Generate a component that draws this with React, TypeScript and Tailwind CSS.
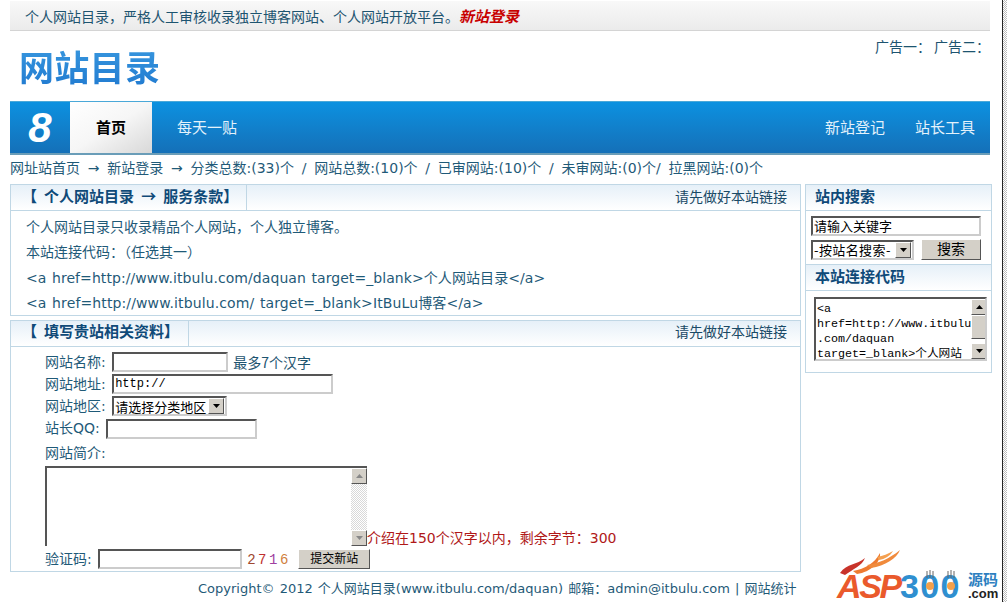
import React from "react";

const bevelIn = "border-2 border-t-[#555] border-l-[#555] border-r-[#ccc] border-b-[#ccc] bg-white";
const bevelOut = "border border-t-white border-l-white border-r-[#555] border-b-[#555] bg-[#d4d0c8]";
const mix = { fontFamily: "'DejaVu Sans','Noto Sans CJK SC',sans-serif" };
const mono = { fontFamily: "'Liberation Mono','Noto Sans CJK SC',monospace" };
const cjk = { fontFamily: "'Noto Sans CJK SC',sans-serif" };
const arial = { fontFamily: "'Liberation Sans',sans-serif" };

function Arrow({ dir = "down", color = "#000" }: { dir?: "up" | "down"; color?: string }) {
  return (
    <svg width="7" height="4" viewBox="0 0 7 4">
      <path d={dir === "down" ? "M0 0H7L3.5 4Z" : "M0 4H7L3.5 0Z"} fill={color} />
    </svg>
  );
}

function ScrollBtn({ dir, color }: { dir: "up" | "down"; color?: string }) {
  return (
    <div className={`${bevelOut} flex h-4 w-4 shrink-0 items-center justify-center`}>
      <Arrow dir={dir} color={color} />
    </div>
  );
}

function PanelHead({ title, tabWidth, lift }: { title: string; tabWidth: string; lift: string }) {
  return (
    <div className="flex h-[26px] items-stretch justify-between border-b border-[#c0d7e5] bg-gradient-to-b from-[#e6f0f8] to-white pr-[13px]">
      <div className={`${tabWidth} ${lift} flex items-center whitespace-pre border-r border-[#c0d7e5] pl-[11px] text-[15px] font-bold text-[#0f4a78] [word-spacing:3.7px]`} style={cjk}>
        {title}
      </div>
      <span className={`${lift} flex items-center text-[14px] text-[#1a4a66]`} style={cjk}>请先做好本站链接</span>
    </div>
  );
}

function Row({ label, className, children }: { label: string; className: string; children?: React.ReactNode }) {
  return (
    <div className={`flex items-center ${className}`}>
      <span className="whitespace-pre text-[14px] text-[#1f5a78]" style={mix}>{label}</span>
      {children}
    </div>
  );
}

function SideHead({ title }: { title: string }) {
  return (
    <div className="flex h-[26px] items-center border-b border-[#c0d7e5] bg-gradient-to-b from-[#e6f0f8] to-white pb-[2px] pl-[9px] text-[15px] font-bold text-[#0f4a78]" style={cjk}>
      {title}
    </div>
  );
}

export default function App() {
  return (
    <div className="flex h-[602px] w-[1007px] overflow-hidden bg-white" style={cjk}>
      <div className="relative w-[1002px] shrink-0 pl-[10px] pt-px">
        <div className="w-[980px]">
          <div className="flex h-[30px] items-center border-b border-[#d4d4d4] bg-gradient-to-b from-[#f8f8f8] to-[#ebebeb] pl-[15px] pt-[2px] text-[14px] text-[#1d5470]">
            个人网站目录，严格人工审核收录独立博客网站、个人网站开放平台。
            <span className="text-[15px] font-bold italic text-[#c80000]">新站登录</span>
          </div>
          <div className="flex h-[70px] justify-between pl-[9px]">
            <div className="mt-[10px] bg-gradient-to-b from-[#3a9ae0] to-[#1a72cc] bg-clip-text text-[35px] font-bold leading-[50px] tracking-[0.3px] text-transparent">网站目录</div>
            <div className="flex gap-[3px] pt-[5px] text-[14px] text-[#1d5470]">
              <span>广告一：</span>
              <span>广告二：</span>
            </div>
          </div>
          <div className="flex h-[54px] items-stretch border-b-2 border-t border-b-[#6a9db8] border-t-[#4aa8d8] bg-gradient-to-b from-[#0b91e0] to-[#1470b8]">
            <div className="flex w-[60px] items-center justify-center text-[42px] font-bold italic text-white" style={arial}>8</div>
            <div className="flex w-[82px] items-center justify-center bg-gradient-to-br from-white via-[#f6f6f6] to-[#d8d8d8] text-[15px] font-bold text-black">首页</div>
            <div className="flex flex-1 items-center justify-between pl-[25px] pr-[15px] text-[15px] text-[#e4f2fb]">
              <span>每天一贴</span>
              <div className="flex gap-[30px]">
                <span>新站登记</span>
                <span>站长工具</span>
              </div>
            </div>
          </div>
          <div className="flex h-[25px] items-center whitespace-pre pt-[2px] text-[14px] text-[#1f5a78] [word-spacing:3.3px]" style={mix}>
            网址站首页 → 新站登录 → 分类总数:(33)个 / 网站总数:(10)个 / 已审网站:(10)个 / 未审网站:(0)个/ 拉黑网站:(0)个
          </div>
        </div>

        <div className="mt-[4px] flex items-start gap-[4px]">
          <div className="flex w-[791px] flex-col gap-[4px]">
            <section className="h-[132px] border border-[#c0d7e5]">
              <PanelHead title="【 个人网站目录 → 服务条款】" tabWidth="w-[236px]" lift="pb-[2px]" />
              <div className="pl-[15px] pt-[4px] text-[14px] leading-[25.3px] text-[#1f5a78]" style={mix}>
                <p>个人网站目录只收录精品个人网站，个人独立博客。</p>
                <p>本站连接代码：（任选其一）</p>
                <p className="tracking-[0.07px] [word-spacing:1px]">&lt;a href=http://www.itbulu.com/daquan target=_blank&gt;个人网站目录&lt;/a&gt;</p>
                <p className="tracking-[0.12px] [word-spacing:1px]">&lt;a href=http://www.itbulu.com/ target=_blank&gt;ItBuLu博客&lt;/a&gt;</p>
              </div>
            </section>
            <section className="h-[252px] border border-[#c0d7e5]">
              <PanelHead title="【 填写贵站相关资料】" tabWidth="w-[178px]" lift="pb-[4px]" />
              <div className="pl-[34px] pt-[4px]">
                <Row label="网站名称: " className="h-[22px]">
                  <div className={`${bevelIn} ml-[2px] h-[20px] w-[116px]`} />
                  <span className="ml-[5px] mt-[1px] text-[14px] text-[#1d5470]">最多7个汉字</span>
                </Row>
                <Row label="网站地址: " className="h-[22px]">
                  <div className={`${bevelIn} ml-[2px] flex h-[20px] w-[221px] items-center pl-px text-[12px] text-black`} style={mono}>http://</div>
                </Row>
                <Row label="网站地区: " className="h-[22px]">
                  <div className={`${bevelIn} ml-[2px] flex h-[20px] w-[115px] items-center justify-between pl-[1px] pr-px text-[13px] text-black`}>
                    <span className="whitespace-nowrap leading-none">请选择分类地区</span>
                    <ScrollBtn dir="down" />
                  </div>
                </Row>
                <Row label="站长QQ: " className="h-[23px]">
                  <div className={`${bevelIn} ml-[2px] h-[20px] w-[151px]`} />
                </Row>
                <Row label="网站简介: " className="h-[26px]" />
                <div className="flex items-end">
                  <div className={`${bevelIn} flex h-[80px] w-[322px] justify-end border-b-0 border-r-0`}>
                    <div className="flex w-4 flex-col justify-between bg-[repeating-conic-gradient(#d8d8d8_0%_25%,#fff_0%_50%)] bg-[length:2px_2px]">
                      <ScrollBtn dir="up" color="#888" />
                      <ScrollBtn dir="down" color="#888" />
                    </div>
                  </div>
                  <span className="-mb-[1px] text-[14px] leading-[18px] text-[#b01818]" style={mix}>介绍在150个汉字以内，剩余字节：300</span>
                </div>
                <Row label="验证码: " className="mt-[3px] h-[20px]">
                  <div className={`${bevelIn} ml-[2px] h-[20px] w-[144px]`} />
                  <span className="ml-[5px] mt-[2px] flex gap-[2.5px] text-[14px] leading-none" style={mono}>
                    <span className="text-[#a04830]">2</span>
                    <span className="text-[#c03030]">7</span>
                    <span className="text-[#a040a0]">1</span>
                    <span className="text-[#d08040]">6</span>
                  </span>
                  <div className={`${bevelOut} ml-[10px] flex h-[20px] w-[72px] items-center justify-center pb-[3px] text-[12px] text-black`}>提交新站</div>
                </Row>
              </div>
            </section>
            <div className="-mt-[4px] pl-[188px] pt-[7px] text-[13px] text-[#1f5a78] [word-spacing:1px]" style={mix}>
              Copyright© 2012 个人网站目录(www.itbulu.com/daquan) 邮箱：admin@itbulu.com | 网站统计
            </div>
          </div>

          <aside className="h-[189px] w-[187px] border border-[#c0d7e5]">
            <SideHead title="站内搜索" />
            <div className="h-[54px] border-b border-[#c0d7e5] px-[5px] pt-[5px]">
              <div className={`${bevelIn} flex h-[20px] w-[170px] items-center pl-px text-[13px] text-black`}>请输入关键字</div>
              <div className="mt-[3px] flex items-center">
                <div className={`${bevelIn} flex h-[20px] w-[103px] items-center justify-between pl-[1px] pr-px text-[13px] tracking-[0.4px] text-black`}>
                  <span className="whitespace-nowrap leading-none">-按站名搜索-</span>
                  <ScrollBtn dir="down" />
                </div>
                <div className={`${bevelOut} ml-[7px] flex h-[21px] w-[60px] items-center justify-center pb-[3px] text-[14px] text-black`}>搜索</div>
              </div>
            </div>
            <SideHead title="本站连接代码" />
            <div className="px-[8px] pt-[6px]">
              <div className={`${bevelIn} flex h-[64px] w-[173px] justify-between overflow-hidden`}>
                <div className="w-[155px] whitespace-nowrap pl-[1px] pt-[3px] text-[11.7px] leading-[15px] text-black" style={mono}>
                  &lt;a<br />href=http://www.itbulu<br />.com/daquan<br />target=_blank&gt;个人网站
                </div>
                <div className="flex w-4 flex-col">
                  <ScrollBtn dir="up" />
                  <div className={`${bevelOut} h-[24px]`} />
                  <div className="mt-auto"><ScrollBtn dir="down" /></div>
                </div>
              </div>
            </div>
          </aside>
        </div>

        <div className="absolute left-[835px] top-[547px] h-[55px] w-[167px]">
          <svg className="absolute left-[2px] top-0" width="70" height="30" viewBox="0 0 70 30" fill="none">
            <path d="M3 26C10 16 20 18 28 11C25 19 16 22 8 28Z" fill="#c8332a" />
            <path d="M16 24C28 22 38 16 43 6C44 15 34 25 20 27Z" fill="#ee7a30" />
            <path d="M30 18C42 16 52 12 63 3C60 11 48 19 34 21Z" fill="#f08a3c" />
            <path d="M40 10C46 9 51 7 56 4C53 9 48 12 42 13Z" fill="#f4a050" />
          </svg>
          <div className="absolute left-[2px] top-[24px] flex items-baseline whitespace-nowrap text-[34px] font-extrabold leading-[30px]" style={arial}>
            <span className="w-[63px] italic tracking-[-2.4px] text-[#ea5a2c]">ASP</span>
            <span className="w-[65px] tracking-[1.4px] text-[#2f8fd0]">300</span>
          </div>
          <svg className="absolute left-[85px] top-[22px]" width="50" height="32" viewBox="0 0 50 32" fill="none">
            <path d="M7 2V9M10 1V9M13 2V9M28 2V9M31 1V9M34 2V9" stroke="#666" strokeWidth="1" />
            <circle cx="10" cy="17" r="4" fill="#f3a04a" />
            <circle cx="31" cy="17" r="4" fill="#f3a04a" />
          </svg>
          <div className="absolute left-[133px] top-[24px] text-[15px] font-bold leading-[15px] text-[#2d7fc0]">源码</div>
          <div className="absolute left-[133px] top-[40px] text-[13px] font-bold leading-[14px] text-[#222]" style={arial}>.com</div>
        </div>
      </div>
      <div className="w-[5px] border-l border-l-[#222] bg-[repeating-conic-gradient(#bbb_0%_25%,#fff_0%_50%)] bg-[length:2px_2px]" />
    </div>
  );
}
